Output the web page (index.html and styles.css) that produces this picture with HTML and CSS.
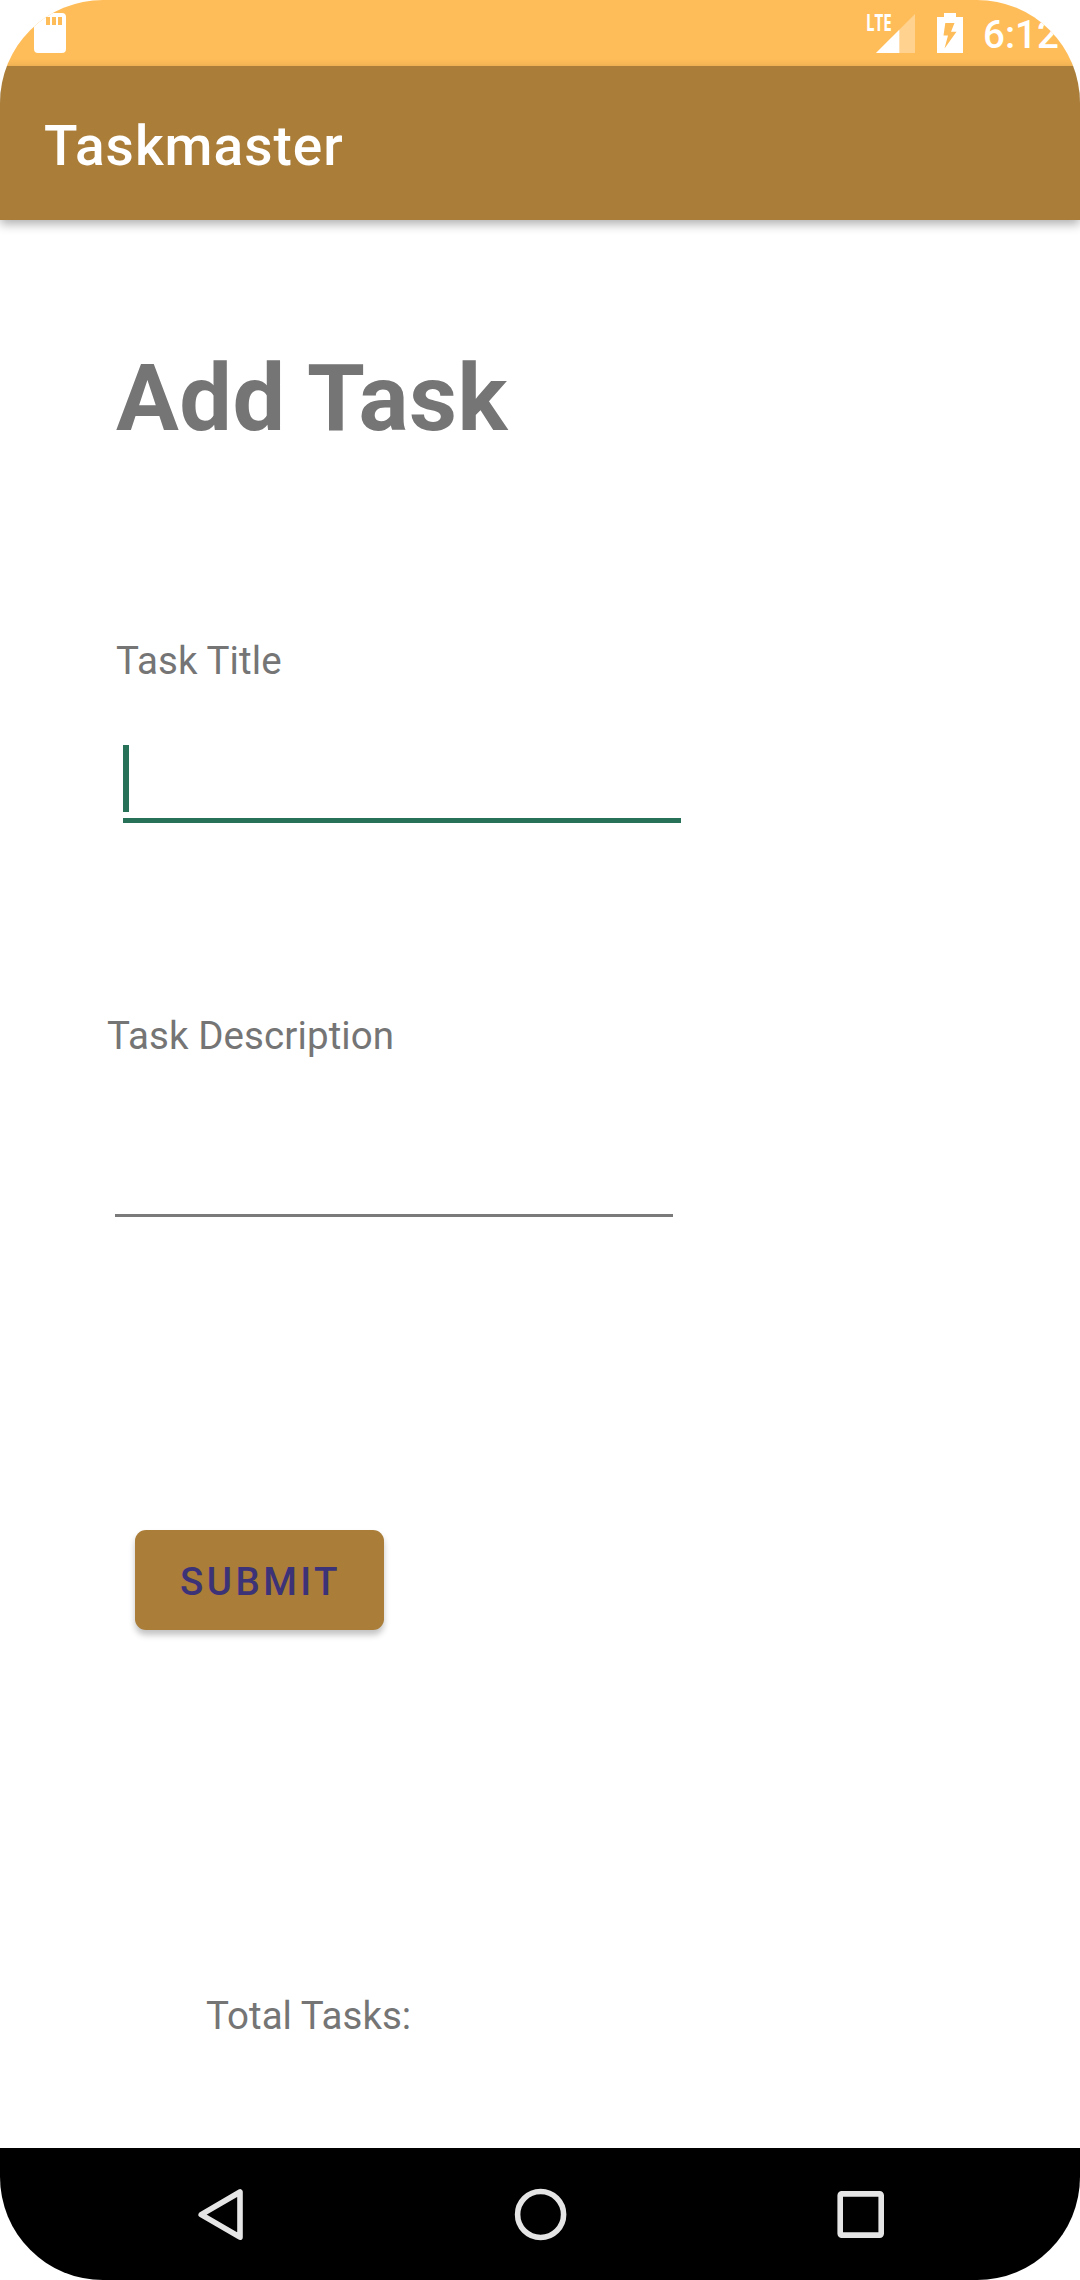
FILE: index.html
```html
<!DOCTYPE html>
<html lang="en">
<head>
<meta charset="utf-8">
<title>Taskmaster</title>
<link rel="stylesheet" href="styles.css">
</head>
<body>
<div class="screen">
  <header class="status-bar">
    <svg class="sd-card" width="32" height="40" viewBox="0 0 32 40"><path fill="#fff" fill-rule="evenodd" d="M11 0H28Q32 0 32 4V36Q32 40 28 40H4Q0 40 0 36V12ZM12 4V12H16V4ZM18 4V12H22V4ZM24 4V12H28V4Z"/></svg>
    <div class="status-icons">
      <div class="signal">
        <span class="network">LTE</span>
        <svg width="39" height="39" viewBox="0 0 39 39"><path fill="#fff" opacity=".33" d="M39 0V39H0Z"/><path fill="#fff" d="M23.3 15.7V39H0Z"/></svg>
      </div>
      <svg class="battery" width="26" height="40" viewBox="0 0 26 40"><path fill="#fff" fill-rule="evenodd" d="M7 0H19V4H26V40H0V4H7ZM8.3 10L6.5 22.5H11L7.5 35.5L19.5 18.7H14L17.5 10Z"/></svg>
      <span class="clock">6:12</span>
    </div>
  </header>
  <div class="app-bar"><h1 class="app-title">Taskmaster</h1></div>
  <main class="content">
    <h2 class="page-title">Add Task</h2>
    <section class="field title-field">
      <div class="label">Task Title</div>
      <div class="entry focused"><span class="caret"></span></div>
    </section>
    <section class="field description-field">
      <div class="label">Task Description</div>
      <div class="entry"></div>
    </section>
    <button class="submit">SUBMIT</button>
    <div class="label total">Total Tasks:</div>
  </main>
  <nav class="nav-bar">
    <svg width="64" height="64" viewBox="0 0 64 64"><path d="M50 10V55.2L11.2 32.6Z"/></svg>
    <svg width="64" height="64" viewBox="0 0 64 64"><circle cx="31.6" cy="32.5" r="23"/></svg>
    <svg width="64" height="64" viewBox="0 0 64 64"><rect x="12.2" y="11.9" width="41" height="41.2" rx="1.5"/></svg>
  </nav>
</div>
</body>
</html>
```

FILE: styles.css
```css
* { box-sizing: border-box; }

body {
  margin: 0;
  background: #fff;
  font-family: Roboto, sans-serif;
}

.screen {
  display: flex;
  flex-direction: column;
  width: 1080px;
  height: 2280px;
  border-radius: 103px;
  overflow: hidden;
  background: #fff;
}

.status-bar {
  display: flex;
  justify-content: space-between;
  flex: none;
  height: 66px;
  padding: 13px 21px 0 34px;
  background: #ffbd59;
}

.status-icons { display: flex; }

.signal {
  display: flex;
  align-items: flex-start;
  margin-right: 22px;
}

.signal svg { margin: 1px 0 0 -15px; }

.network {
  width: 25px;
  font: 700 23px/19px "Open Sans", sans-serif;
  color: #fff;
  transform: scaleX(.66);
  transform-origin: 0 0;
}

.battery { margin-right: 20px; }

.clock {
  width: 76px;
  font-size: 38.5px;
  font-weight: 500;
  line-height: 44px;
  color: #fff;
  white-space: nowrap;
}

.app-bar {
  display: flex;
  align-items: center;
  flex: none;
  height: 154px;
  padding: 6px 0 0 44px;
  background: #aa7d39;
  box-shadow: 0 4px 10px rgba(0, 0, 0, .32);
}

.app-title {
  margin: 0;
  font-size: 55px;
  font-weight: 500;
  line-height: 64px;
  letter-spacing: 1px;
  color: #fff;
}

.content {
  display: flex;
  flex: 1;
  flex-direction: column;
  align-items: flex-start;
  padding-top: 116px;
  color: #757575;
}

.page-title {
  margin: 0 0 0 116px;
  font-size: 93.5px;
  font-weight: 700;
  line-height: 124px;
  letter-spacing: .5px;
}

.label {
  font-size: 38.5px;
  line-height: 52px;
  letter-spacing: .1px;
}

.field { width: 574px; }

.title-field { margin: 175px 0 0 116px; }

.description-field { margin: 187px 0 0 107px; }

.entry {
  width: 558px;
  border-bottom: 3px solid #7a7a7a;
}

.title-field .entry {
  height: 78px;
  margin: 58px 0 0 7px;
}

.description-field .entry {
  height: 80px;
  margin: 75px 0 0 8px;
}

.entry.focused { border-bottom: 5px solid #267158; }

.caret {
  display: block;
  width: 6px;
  height: 67px;
  background: #267158;
}

.submit {
  width: 249px;
  height: 100px;
  margin: 313px 0 0 135px;
  padding: 3px 0 0 2px;
  border: 0;
  border-radius: 11px;
  background: #aa7d39;
  box-shadow: 0 5px 6px rgba(0, 0, 0, .24);
  font: 500 38.5px/52px Roboto, sans-serif;
  letter-spacing: .0893em;
  color: #3c3278;
}

.total {
  margin: 360px 0 0 206px;
  letter-spacing: 0;
}

.nav-bar {
  display: flex;
  align-items: center;
  justify-content: space-between;
  flex: none;
  height: 132px;
  padding: 0 188px 0 190px;
  background: #000;
}

.nav-bar svg {
  fill: none;
  stroke: #e5e5e5;
  stroke-width: 5.6;
  stroke-linejoin: round;
}
```
